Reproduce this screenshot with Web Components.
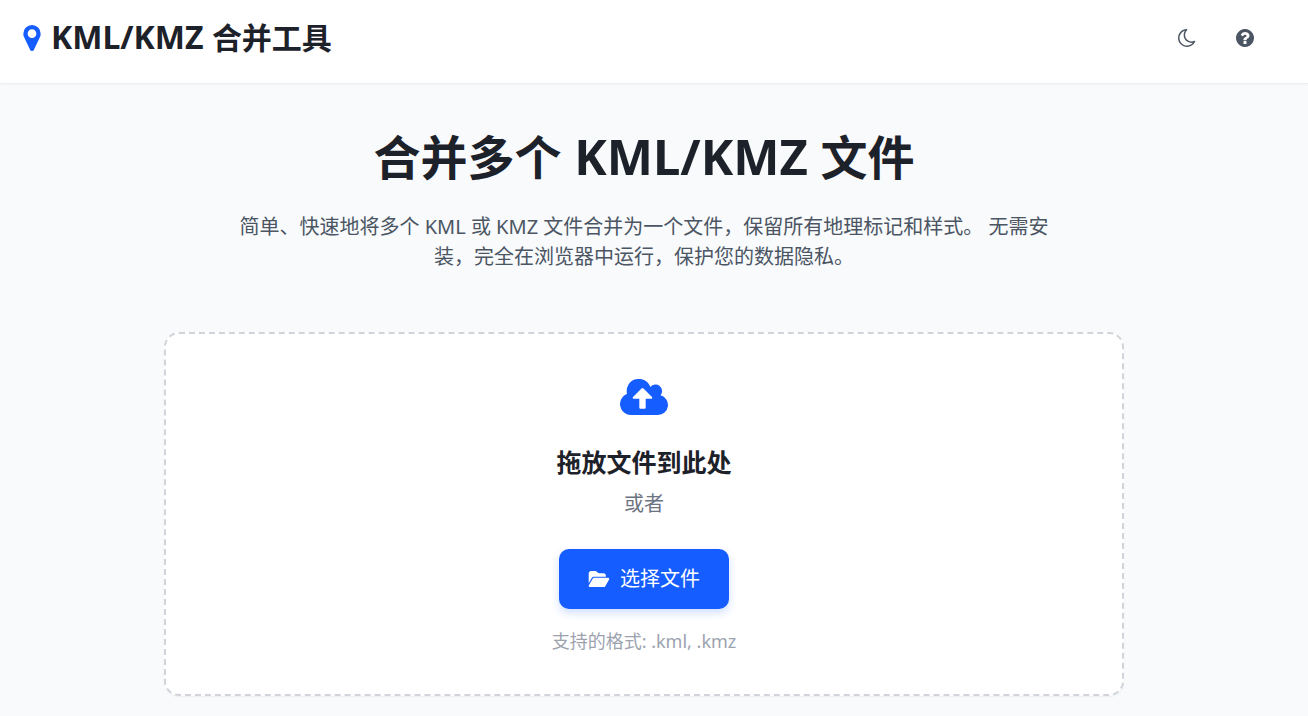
<!DOCTYPE html>
<html lang="zh-CN">
<head>
<meta charset="utf-8">
<title>KML/KMZ 合并工具</title>
<style>
body {
  margin: 0;
  font-family: "Noto Sans", "Noto Sans CJK SC", sans-serif;
  font-size: 20px;
  line-height: 30px;
  color: #1d2129;
  background: #f8fafc;
}
</style>
</head>
<body>
<merge-app></merge-app>
<script>
const ICONS = {
  marker: ['384 128 1024 1536', 'M1152 640q0-106-75-181t-181-75-181 75-75 181 75 181 181 75 181-75 75-181zm256 0q0 109-33 179l-364 774q-16 33-47.5 52t-67.5 19-67.5-19-46.5-52l-365-774q-33-70-33-179 0-212 150-362t362-150 362 150 150 362z'],
  moon: ['128 128 1536 1536', 'M1390 1303q-54 9-110 9-182 0-337-90t-245-245-90-337q0-189 104-356-201 60-328.5 229t-127.5 384q0 130 51 248.5t136.5 204 204 136.5 248.5 51q144 0 273.5-61.5t220.5-172.5zm203-85q-94 203-283.5 324.5t-413.5 121.5q-156 0-298-61t-245-164-164-245-61-298q0-153 57.5-292.5t156-241.5 235.5-164.5 290-68.5q44-2 61 39 18 41-15 72-86 78-131.5 181.5t-45.5 218.5q0 148 73 273t198 198 273 73q118 0 228-51 41-18 72 13 14 14 17.5 34t-4.5 38z'],
  help: ['128 128 1536 1536', 'M1024 1376v-192q0-14-9-23t-23-9h-192q-14 0-23 9t-9 23v192q0 14 9 23t23 9h192q14 0 23-9t9-23zm256-672q0-88-55.5-163t-138.5-116-170-41q-243 0-371 213-15 24 8 42l132 100q7 6 19 6 16 0 25-12 53-68 86-92 34-24 86-24 48 0 85.5 26t37.5 59q0 38-20 57t-68 41q-63 28-115.5 86.5t-52.5 125.5v36q0 14 9 23t23 9h192q14 0 23-9t9-23q0-19 21.5-49.5t54.5-49.5q32-18 49-28.5t46-35 44.5-48 28-60.5 12.5-81zm384 192q0 209-103 385.5t-279.5 279.5-385.5 103-385.5-103-279.5-279.5-103-385.5 103-385.5 279.5-279.5 385.5-103 385.5 103 279.5 279.5 103 385.5z'],
  cloud: ['0 0 48 36', 'M11 36A11 11 0 0 1 7 14.760A12.200 12.200 0 0 1 30.400 8A6.500 6.500 0 0 1 40.600 16.350A10 10 0 0 1 38 36ZM21.500 9.500L13 18Q12.200 19.500 13.600 19.800H19.300V28.700Q19.300 29.700 20.300 29.700H24.700Q25.700 29.700 25.700 28.700V19.800H31.400Q32.800 19.500 32 18L23.500 9.500Q22.500 8.600 21.500 9.500Z'],
  folder: ['0 32 576 448', 'M88.7 223.800L0 375.800V96C0 60.700 28.700 32 64 32H181.500c17 0 33.300 6.700 45.300 18.700l26.500 26.500c12 12 28.300 18.700 45.300 18.700H416c35.300 0 64 28.700 64 64v32H144c-22.800 0-43.800 12.100-55.300 31.800zm27.600 16.100C122.100 230 132.600 224 144 224H544c11.500 0 22 6.100 27.700 16.100s5.700 22.200-.1 32.100l-112 192C453.900 474 443.400 480 432 480H32c-11.500 0-22-6.100-27.700-16.100s-5.700-22.200 .1-32.100l112-192z']
};

class UiIcon extends HTMLElement {
  connectedCallback() {
    if (this.shadowRoot) return;
    const [box, path] = ICONS[this.getAttribute('name')];
    this.attachShadow({ mode: 'open' }).innerHTML = `
      <style>
        :host { display: block; flex: none; }
        svg { display: block; width: 100%; height: 100%; fill: currentColor; fill-rule: evenodd; }
      </style>
      <svg viewBox="${box}" aria-hidden="true"><path d="${path}"/></svg>`;
  }
}

class AppHeader extends HTMLElement {
  constructor() {
    super();
    this.attachShadow({ mode: 'open' }).innerHTML = `
      <style>
        :host { display: block; background: #fff; border-bottom: 1px solid #eceef1; box-shadow: 0 1px 2px rgb(0 0 0 / 4%); --latin-size: 32px; }
        header { display: flex; align-items: center; justify-content: space-between; padding: 15px 44px 23px 23px; }
        .brand { display: flex; align-items: center; gap: 10px; }
        .brand ui-icon { width: 18px; height: 26px; color: #165dff; }
        h1 { margin: 0; font-size: 30px; line-height: 45px; font-weight: 700; }
        nav { display: flex; gap: 20px; }
        button { display: grid; place-items: center; width: 38px; height: 38px; padding: 0; border: 0; border-radius: 50%; background: none; color: #4b5563; cursor: pointer; }
        button ui-icon { width: 18px; height: 18px; }
      </style>
      <header>
        <div class="brand"><ui-icon name="marker"></ui-icon><h1><slot></slot></h1></div>
        <nav>
          <button type="button" aria-label="切换主题"><ui-icon name="moon"></ui-icon></button>
          <button type="button" aria-label="帮助"><ui-icon name="help"></ui-icon></button>
        </nav>
      </header>`;
  }
}

class PageHero extends HTMLElement {
  constructor() {
    super();
    this.attachShadow({ mode: 'open' }).innerHTML = `
      <style>
        :host { display: block; text-align: center; }
        h2 { margin: 0 0 26px; font-size: 47px; line-height: 58px; font-weight: 700; --latin-size: 49px; }
        p { max-width: 834px; margin: 0 auto; color: #4b5563; }
      </style>
      <h2><slot name="title"></slot></h2>
      <p><slot></slot></p>`;
  }
}

class DropZone extends HTMLElement {
  constructor() {
    super();
    this.attachShadow({ mode: 'open' }).innerHTML = `
      <style>
        :host { display: block; }
        section { display: flex; flex-direction: column; align-items: center; padding: 45px 40px 39px; border: 2px dashed #d1d5db; border-radius: 15px; background: #fff; box-shadow: 0 1px 2px rgb(0 0 0 / 5%); }
        .cloud { width: 48px; height: 36px; color: #165dff; }
        h3 { margin: 28px 0 8px; font-size: 25px; line-height: 38px; font-weight: 700; }
        p { margin: 0; }
        .or { color: #6b7280; }
        button { display: flex; align-items: center; gap: 10px; margin: 30px 0 18px; padding: 15px 29px; border: 0; border-radius: 10px; background: #165dff; color: #fff; font: inherit; box-shadow: 0 4px 8px rgb(22 93 255 / 20%); cursor: pointer; }
        button ui-icon { width: 22px; height: 16px; }
        .formats { font-size: 18px; line-height: 28px; color: #9ca3af; }
      </style>
      <section>
        <ui-icon class="cloud" name="cloud"></ui-icon>
        <h3>拖放文件到此处</h3>
        <p class="or">或者</p>
        <button type="button"><ui-icon name="folder"></ui-icon><span>选择文件</span></button>
        <p class="formats">支持的格式: .kml, .kmz</p>
      </section>`;
  }
}

class MergeApp extends HTMLElement {
  constructor() {
    super();
    this.attachShadow({ mode: 'open' }).innerHTML = `
      <style>
        :host { display: block; }
        main { max-width: 960px; margin: 0 auto; padding: 44px 20px 20px; }
        .page { padding-right: 20px; }
        .latin { font-size: var(--latin-size); line-height: 1; }
        drop-zone { margin-top: 60px; }
      </style>
      <app-header><span class="latin">KML/KMZ </span>合并工具</app-header>
      <div class="page"><main>
        <page-hero><span slot="title">合并多个<span class="latin"> KML/KMZ </span>文件</span>简单、快速地将多个 KML 或 KMZ 文件合并为一个文件，保留所有地理标记和样式。 无需安装，完全在浏览器中运行，保护您的数据隐私。</page-hero>
        <drop-zone></drop-zone>
      </main></div>`;
  }
}

customElements.define('ui-icon', UiIcon);
customElements.define('app-header', AppHeader);
customElements.define('page-hero', PageHero);
customElements.define('drop-zone', DropZone);
customElements.define('merge-app', MergeApp);
</script>
</body>
</html>
